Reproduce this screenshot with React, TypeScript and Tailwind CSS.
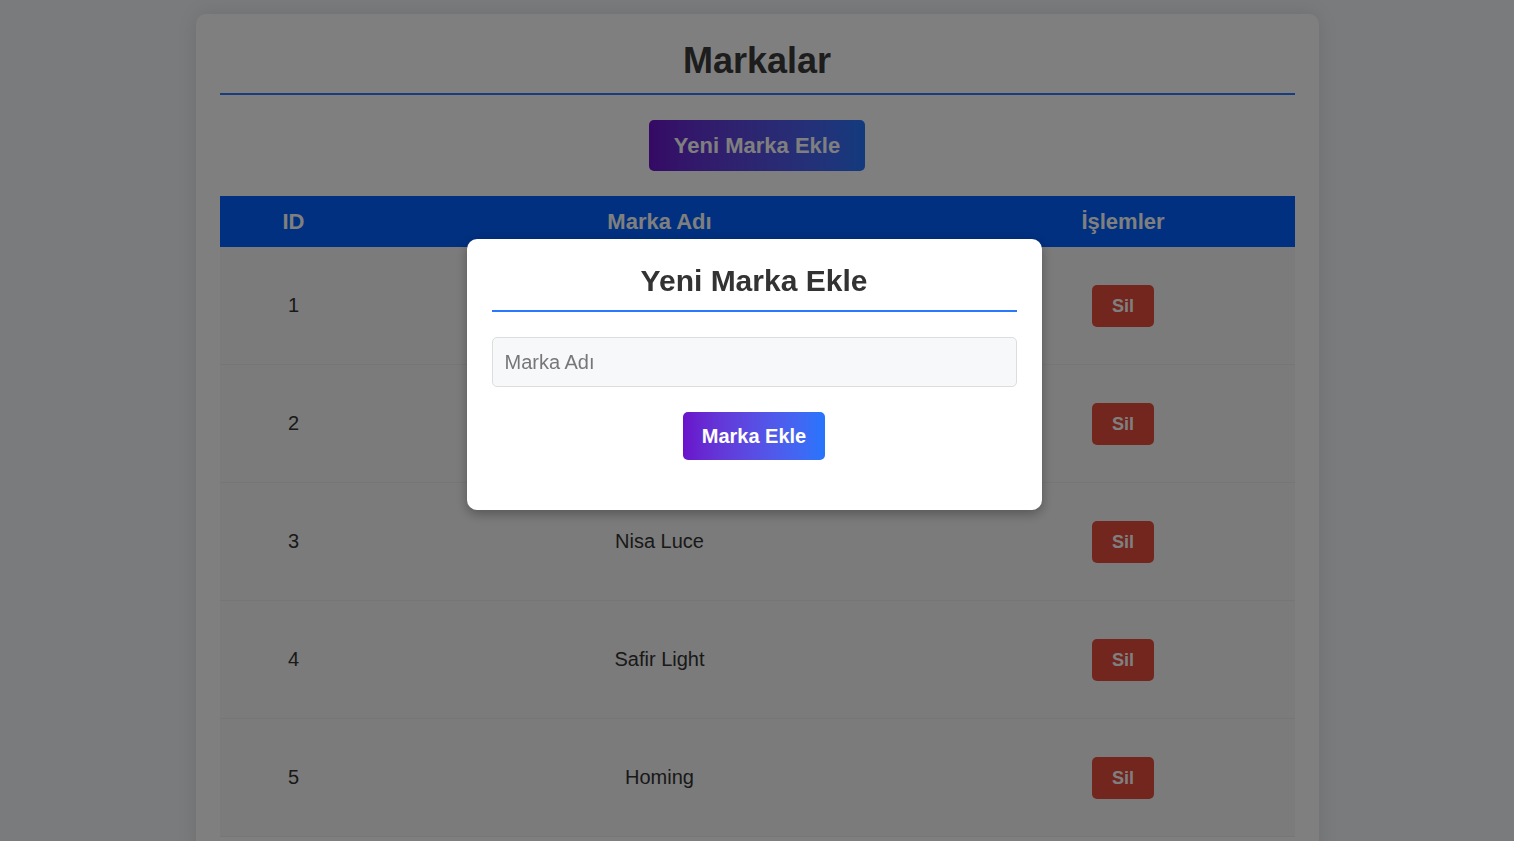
import { useState } from "react";

type Brand = { id: number; name: string };

const brands: Brand[] = [
  { id: 1, name: "Osram" },
  { id: 2, name: "Philips" },
  { id: 3, name: "Nisa Luce" },
  { id: 4, name: "Safir Light" },
  { id: 5, name: "Homing" },
];

export default function App() {
  const [open] = useState(true);

  return (
    <div className="h-screen overflow-hidden bg-[#f4f6f9] pt-[14px] font-['Liberation_Sans',Arial,sans-serif] text-[#333]">
      <div className="mx-auto w-[1123px] rounded-[10px] bg-white px-6 pt-[26px] pb-6 shadow-[0_0_20px_rgba(0,0,0,0.1)]">
        <h1 className="border-b-2 border-[#2e78ff] pb-[12px] text-center text-[36px] font-bold leading-[41px] text-[#3a3a3a]">
          Markalar
        </h1>

        <div className="flex justify-center py-[25px]">
          <button className="h-[51px] w-[216px] rounded-[5px] bg-linear-to-r from-[#6a11cb] to-[#2575fc] text-[22px] font-bold text-white">
            Yeni Marka Ekle
          </button>
        </div>

        <div className="w-full">
          <div className="grid h-[51px] grid-cols-[148px_584px_343px] items-center bg-[#0060ff] text-center text-[22px] font-bold text-white">
            <div>ID</div>
            <div>Marka Adı</div>
            <div>İşlemler</div>
          </div>
          {brands.map((b) => (
            <div
              key={b.id}
              className="grid h-[118px] grid-cols-[148px_584px_343px] items-center border-b border-[#ececec] bg-[#f6f6f6] text-center text-[20px]"
            >
              <div className="-mt-[2px]">{b.id}</div>
              <div className="-mt-[2px]">{b.name}</div>
              <div className="flex justify-center">
                <button className="h-[42px] w-[62px] rounded-[5px] bg-[#e74c3c] pt-[2px] text-[18px] font-bold text-white">
                  Sil
                </button>
              </div>
            </div>
          ))}
        </div>
      </div>

      {open && (
        <div className="fixed inset-0 flex justify-center bg-black/50 pt-[239px]">
          <div className="h-[271px] w-[575px] -translate-x-[3px] rounded-[10px] bg-white px-[25px] pt-[24px] shadow-[0_4px_12px_rgba(0,0,0,0.3)]">
            <h2 className="border-b-2 border-[#2979ff] pb-[12px] text-center text-[30px] font-bold leading-[35px] text-[#333]">
              Yeni Marka Ekle
            </h2>
            <input
              type="text"
              placeholder="Marka Adı"
              className="mt-[25px] h-[50px] w-full rounded-[5px] border border-[#dddddd] bg-[#f7f8fa] px-3 text-[20px] text-[#333] placeholder:text-[#777] outline-none"
            />
            <div className="flex justify-center pt-[25px]">
              <button className="h-[48px] w-[142px] rounded-[5px] bg-linear-to-r from-[#6a11cb] to-[#2575fc] text-[20px] font-bold text-white">
                Marka Ekle
              </button>
            </div>
          </div>
        </div>
      )}
    </div>
  );
}
